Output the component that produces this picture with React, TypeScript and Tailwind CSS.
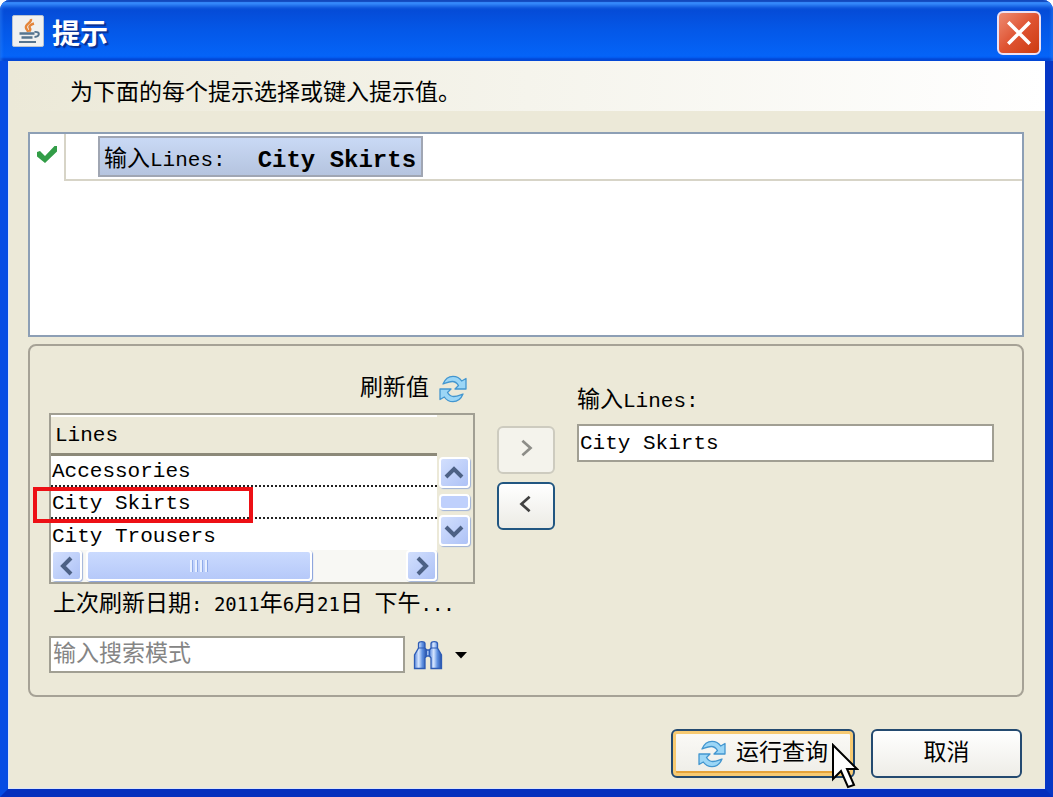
import type { ReactNode } from 'react'
import clsx from 'clsx'

const lines = ['Accessories', 'City Skirts', 'City Trousers']

function RefreshIcon() {
  return (
    <svg className="h-7 w-7 shrink-0" viewBox="0 0 28 28" strokeLinejoin="round" aria-hidden="true">
      <g fill="#9bd6f6" stroke="#4396cf" strokeWidth="1.3">
        <path d="M4 9C6 4 9.500 1.300 14 1.300c3.800 0 6.700 1.700 8.700 4.700L27 3.500V14H16l3.500-3.500C18 8 16 6.500 13.300 6.500 9.500 6.500 7 8 4 9Z" />
        <path d="M24 19C22 24 18.500 26.700 14 26.700c-3.800 0-6.700-1.700-8.700-4.700L1 24.500V14H12l-3.500 3.500c1.500 2.500 3.500 4 6.200 4C18.500 21.500 21 20 24 19Z" />
      </g>
    </svg>
  )
}

function JavaIcon() {
  return (
    <svg className="h-8 w-8 shrink-0" viewBox="0 0 32 32" fill="none" aria-hidden="true">
      <rect x="0.5" y="0.5" width="31" height="31" rx="1.5" fill="#f0f1f0" stroke="#b7c2d2" />
      <path d="M19 4c1 4-6.500 5-5 9 .5 1.500 1.800 2.300 2 4M22 8.500c-3 .8-5.500 2.500-4.200 4.500 1 1.500.5 2.500-.5 3.500" stroke="#e4853a" strokeWidth="2.4" />
      <path d="M7.500 18.500h15M9.500 22.500h11" stroke="#56758f" strokeWidth="2.4" />
      <path d="M22.500 17c6-1 5.500 4.500 0 5M7 27h17" stroke="#56758f" strokeWidth="2" />
    </svg>
  )
}

function Binoculars() {
  return (
    <svg className="h-[30px] w-[30px]" viewBox="0 0 30 30" aria-hidden="true">
      <defs>
        <linearGradient id="barrel" x1="0" x2="1">
          <stop offset="0" stopColor="#5c8ade" />
          <stop offset=".35" stopColor="#d6e6ff" />
          <stop offset=".65" stopColor="#5f91e2" />
          <stop offset="1" stopColor="#2852a8" />
        </linearGradient>
      </defs>
      <g fill="url(#barrel)" stroke="#2e5cb5" strokeWidth="1.3">
        <path d="M11 10h8v6h-8z" />
        <path d="M5.500 8V3.500C6 1 11.500 1 12 3.500V8l1.500 2v6l-1.500 2v10.500H1.500V15Z" />
        <path d="M18 8V3.500c.5-2.500 6-2.500 6.500 0V8l4 7v13.500H18V18l-1.500-2v-6Z" />
      </g>
      <path d="M5.500 8h6.500M18 8h6.500" stroke="#2e5cb5" strokeWidth="1.2" />
    </svg>
  )
}

function Arrow({ d, className }: { d: string; className: string }) {
  return (
    <svg className={className} viewBox="0 0 20 20" fill="none" stroke="currentColor" aria-hidden="true">
      <path d={d} />
    </svg>
  )
}

function ScrollButton({ label, d }: { label: string; d: string }) {
  return (
    <button
      type="button"
      aria-label={label}
      className="flex h-[31px] w-[31px] shrink-0 items-center justify-center rounded border-2 border-white bg-linear-to-br from-[#d2dffd] to-[#aec2f6] text-[#4d6185] shadow-[1px_1px_1px_#9fb2d8]"
    >
      <Arrow d={d} className="h-5 w-5 stroke-[4]" />
    </button>
  )
}

function Latin({ children }: { children: ReactNode }) {
  return <span className="text-[21px]">{children}</span>
}

function Digits({ children }: { children: ReactNode }) {
  return <span className="font-['DejaVu_Sans_Mono',monospace] text-[19px]">{children}</span>
}

export default function App() {
  return (
    <div className="flex min-h-screen flex-col overflow-hidden rounded-t-[10px] bg-[#0641d8] font-['Liberation_Mono','Noto_Sans_CJK_SC',monospace] text-[23px] leading-7 text-black">
      <header className="flex h-[61px] items-center gap-2 bg-linear-to-b from-[#0645cf] via-[#0458e8] to-[#0566fb] pr-3 pl-3 shadow-[inset_0_2px_1px_#1248bd,inset_0_6px_4px_#3b91ff,inset_0_-3px_2px_#0347d5]">
        <JavaIcon />
        <h1 className="grow pt-0.5 font-['Noto_Sans_CJK_SC',sans-serif] text-[28px] leading-8 font-bold text-white [text-shadow:2px_2px_1px_#0a2f91]">
          提示
        </h1>
        <button
          type="button"
          aria-label="关闭"
          className="mt-1 flex h-11 w-11 items-center justify-center rounded-md border-2 border-[#ece1f4] bg-linear-to-br from-[#ed8a70] via-[#df5331] to-[#cc3c0c] text-white"
        >
          <Arrow d="M1 1l18 18M19 1L1 19" className="h-6 w-6 stroke-[3]" />
        </button>
      </header>

      <div className="flex grow border-x-8 border-t-0 border-b-8 border-r-[#0637c5] border-b-[#052fbd] border-l-[#064ce4]">
        <main className="flex min-w-0 grow flex-col border-b border-l border-[#dbe5fa] bg-[#ece9d8]">
          <p className="bg-linear-to-r from-[#ece9d8] via-[#f5f4ec] to-white pt-[19px] pb-[3px] pl-[61px]">
            为下面的每个提示选择或键入提示值。
          </p>

          <div className="flex grow flex-col pt-[21px] pr-[21px] pl-[19px]">
            <section className="min-h-[200px] grow border-2 border-[#8d9fb5] bg-white">
              <div className="flex h-[47px]">
                <div className="flex w-[34px] shrink-0 justify-center pt-2">
                  <svg className="h-7 w-6" viewBox="0 0 24 28" aria-hidden="true">
                    <path d="M2 10l3-1 5 5L19.500 4h2.500v5.500L10 21 2 14.500Z" fill="#329d47" />
                  </svg>
                </div>
                <div className="grow border-b-2 border-l-2 border-[#d7d4c7] pt-0.5 pl-8">
                  <button
                    type="button"
                    className="flex h-[41px] w-[325px] items-center border-2 border-[#a0a6b3] bg-linear-to-b from-[#c9d9f5] to-[#b5c4df] pt-2 pl-1 text-left whitespace-nowrap"
                  >
                    <span>
                      输入<Latin>Lines:</Latin>
                    </span>
                    <strong className="ml-8 text-[24px]">City Skirts</strong>
                  </button>
                </div>
              </div>
            </section>

            <section className="mt-[7px] flex rounded-lg border-2 border-[#a6a296] pt-[25px] pr-7 pb-[22px] pl-[19px]">
              <div className="w-[426px] shrink-0">
                <div className="flex items-center justify-end gap-2.5 pt-1 pr-2">
                  <span>刷新值</span>
                  <button type="button" aria-label="刷新值">
                    <RefreshIcon />
                  </button>
                </div>

                <div className="relative mt-2.5 border-2 border-[#a19f93]">
                  <div className="flex">
                    <table className="grow border-collapse text-left text-[21px]">
                      <thead>
                        <tr className="h-[38px] border-t-2 border-b-3 border-t-white border-b-[#8c8979]">
                          <th scope="col" className="pt-0.5 pl-1 font-normal">
                            Lines
                          </th>
                        </tr>
                      </thead>
                      <tbody className="bg-white">
                        {lines.map((line) => (
                          <tr
                            key={line}
                            className={clsx(
                              'h-8',
                              line === 'City Skirts' && 'border-y-2 border-dotted border-[#222222]',
                            )}
                          >
                            <td className="pt-1 pl-px leading-6">{line}</td>
                          </tr>
                        ))}
                      </tbody>
                    </table>
                    <div className="flex w-9 shrink-0 flex-col items-center justify-between pt-[42px] pr-0.5 pb-1">
                      <ScrollButton label="向上滚动" d="M2 14l8-8 8 8" />
                      <div className="h-4 w-[31px] rounded-sm border-2 border-white bg-[#bfd0fc] shadow-[1px_1px_1px_#9fb2d8]" />
                      <ScrollButton label="向下滚动" d="M2 6l8 8 8-8" />
                    </div>
                  </div>
                  <div className="mr-9 flex items-center bg-[#f8f8f4] pb-px">
                    <ScrollButton label="向左滚动" d="M14 2l-8 8 8 8" />
                    <div className="ml-1 flex h-[31px] w-[226px] items-center justify-center gap-0.5 rounded border-2 border-white bg-linear-to-b from-[#cadafe] to-[#b6c9f9] shadow-[1px_1px_1px_#829ddb]">
                      {[0, 1, 2, 3].map((grip) => (
                        <span key={grip} className="h-3 w-[3px] border-r border-[#8fabe9] bg-[#e7efff]" />
                      ))}
                    </div>
                    <div className="grow" />
                    <ScrollButton label="向右滚动" d="M6 2l8 8-8 8" />
                  </div>
                  <div className="pointer-events-none absolute top-[72px] -left-[18px] h-9 w-[220px] border-4 border-[#ed1015]" />
                </div>

                <p className="mt-1.5 pl-1 whitespace-nowrap">
                  上次刷新日期<Digits>: 2011</Digits>年<Digits>6</Digits>月<Digits>21</Digits>日<Digits> </Digits>
                  下午<Digits>...</Digits>
                </p>

                <div className="mt-[17px] flex items-center">
                  <input
                    type="search"
                    aria-label="输入搜索模式"
                    placeholder="输入搜索模式"
                    className="h-[37px] w-[356px] border-2 border-[#a19f93] bg-white px-0.5 placeholder:text-[#858585]"
                  />
                  <button type="button" aria-label="搜索" className="ml-2 flex items-center gap-3">
                    <Binoculars />
                    <svg className="h-2 w-3" viewBox="0 0 12 8" aria-hidden="true">
                      <path d="M0 1h12L6 7.500Z" />
                    </svg>
                  </button>
                </div>
              </div>

              <div className="ml-[22px] flex shrink-0 flex-col gap-2 pt-[55px]">
                <button
                  type="button"
                  disabled
                  aria-label="添加"
                  className="flex h-12 w-[58px] items-center justify-center rounded-md border-2 border-[#cdcbbf] bg-[#f4f3ec] pb-1 text-[#8d8d88]"
                >
                  <Arrow d="M6 2l9 8-9 8" className="h-[18px] w-[18px] stroke-[3]" />
                </button>
                <button
                  type="button"
                  aria-label="移除"
                  className="flex h-12 w-[58px] items-center justify-center rounded-md border-2 border-[#215681] bg-linear-to-b from-white to-[#ecebe5] pb-1 text-[#414141]"
                >
                  <Arrow d="M14 2l-9 8 9 8" className="h-[18px] w-[18px] stroke-[3]" />
                </button>
              </div>

              <div className="ml-[22px] flex min-w-0 grow flex-col pt-4">
                <label htmlFor="lines-value">
                  输入<Latin>Lines:</Latin>
                </label>
                <input
                  id="lines-value"
                  type="text"
                  defaultValue="City Skirts"
                  className="mt-2 h-[38px] w-full border-2 border-[#a19f93] bg-white px-px text-[21px]"
                />
              </div>
            </section>

            <footer className="mt-8 mb-2.5 flex justify-end gap-4 pr-0.5">
              <button
                type="button"
                className="relative flex h-[49px] w-[184px] items-center justify-center gap-2.5 rounded-md border-2 border-[#244a70] bg-linear-to-b from-[#fbfaf7] to-[#eeede7] shadow-[inset_0_0_0_3px_#f7ca72,inset_0_-5px_0_#e5a33a]"
              >
                <RefreshIcon />
                运行查询
                <svg className="absolute top-3 left-[158px] h-[46px] w-[28px]" viewBox="-1 -1 14 23" fill="white" stroke="black" aria-hidden="true">
                  <path d="M0 0v17l4-4 3.500 8 3-1-3.500-8h5Z" />
                </svg>
              </button>
              <button
                type="button"
                className="h-[49px] w-[151px] rounded-md border-2 border-[#244a70] bg-linear-to-b from-white to-[#eeede7]"
              >
                取消
              </button>
            </footer>
          </div>
        </main>
      </div>
    </div>
  )
}
